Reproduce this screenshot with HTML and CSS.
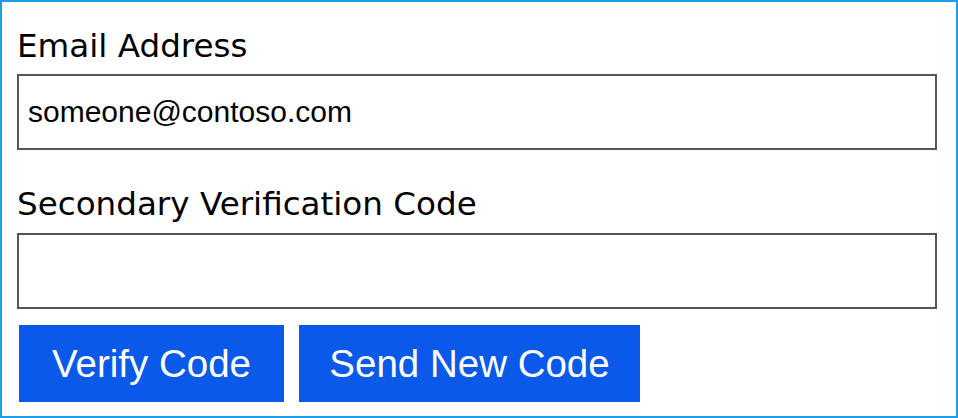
FILE: index.html
```html
<!DOCTYPE html>
<html>
<head>
<meta charset="utf-8">
<link rel="stylesheet" href="styles.css">
</head>
<body>
<div class="panel">
  <label class="field-label" for="email">Email Address</label>
  <input class="field-input" id="email" type="text" value="someone@contoso.com">
  <label class="field-label second" for="code">Secondary Verification Code</label>
  <input class="field-input" id="code" type="text" value="">
  <div class="actions">
    <button class="btn verify" type="button">Verify Code</button>
    <button class="btn send" type="button">Send New Code</button>
  </div>
</div>
</body>
</html>
```
FILE: styles.css
```css
html, body {
  margin: 0;
  padding: 0;
  background: #ffffff;
}
.panel {
  box-sizing: border-box;
  width: 958px;
  height: 418px;
  border: 2px solid #1a9fe8;
  padding: 25px 19px 0 15px;
  display: flex;
  flex-direction: column;
}
.field-label {
  display: block;
  font-family: "DejaVu Sans", Verdana, sans-serif;
  font-size: 32.6px;
  line-height: 38px;
  color: #000;
  margin-bottom: 9px;
  white-space: nowrap;
}
.field-label.second {
  margin-top: 35px;
  margin-bottom: 10px;
}
.field-input {
  box-sizing: border-box;
  flex: none;
  width: 920px;
  height: 76px;
  margin: 0;
  border: 2px solid #555555;
  padding: 0 9px;
  font-family: "Liberation Sans", Arial, sans-serif;
  font-size: 30px;
  color: #000;
  background: #fff;
  outline: none;
}
.actions {
  display: flex;
  gap: 15px;
  margin-top: 16px;
  padding-left: 2px;
}
.btn {
  height: 77px;
  border: none;
  margin: 0;
  background: #0b59e8;
  color: #ffffff;
  font-family: "Liberation Sans", Arial, sans-serif;
  font-size: 38.5px;
  padding: 0;
  cursor: pointer;
}
.btn.verify {
  width: 265px;
}
.btn.send {
  width: 341px;
}
```
